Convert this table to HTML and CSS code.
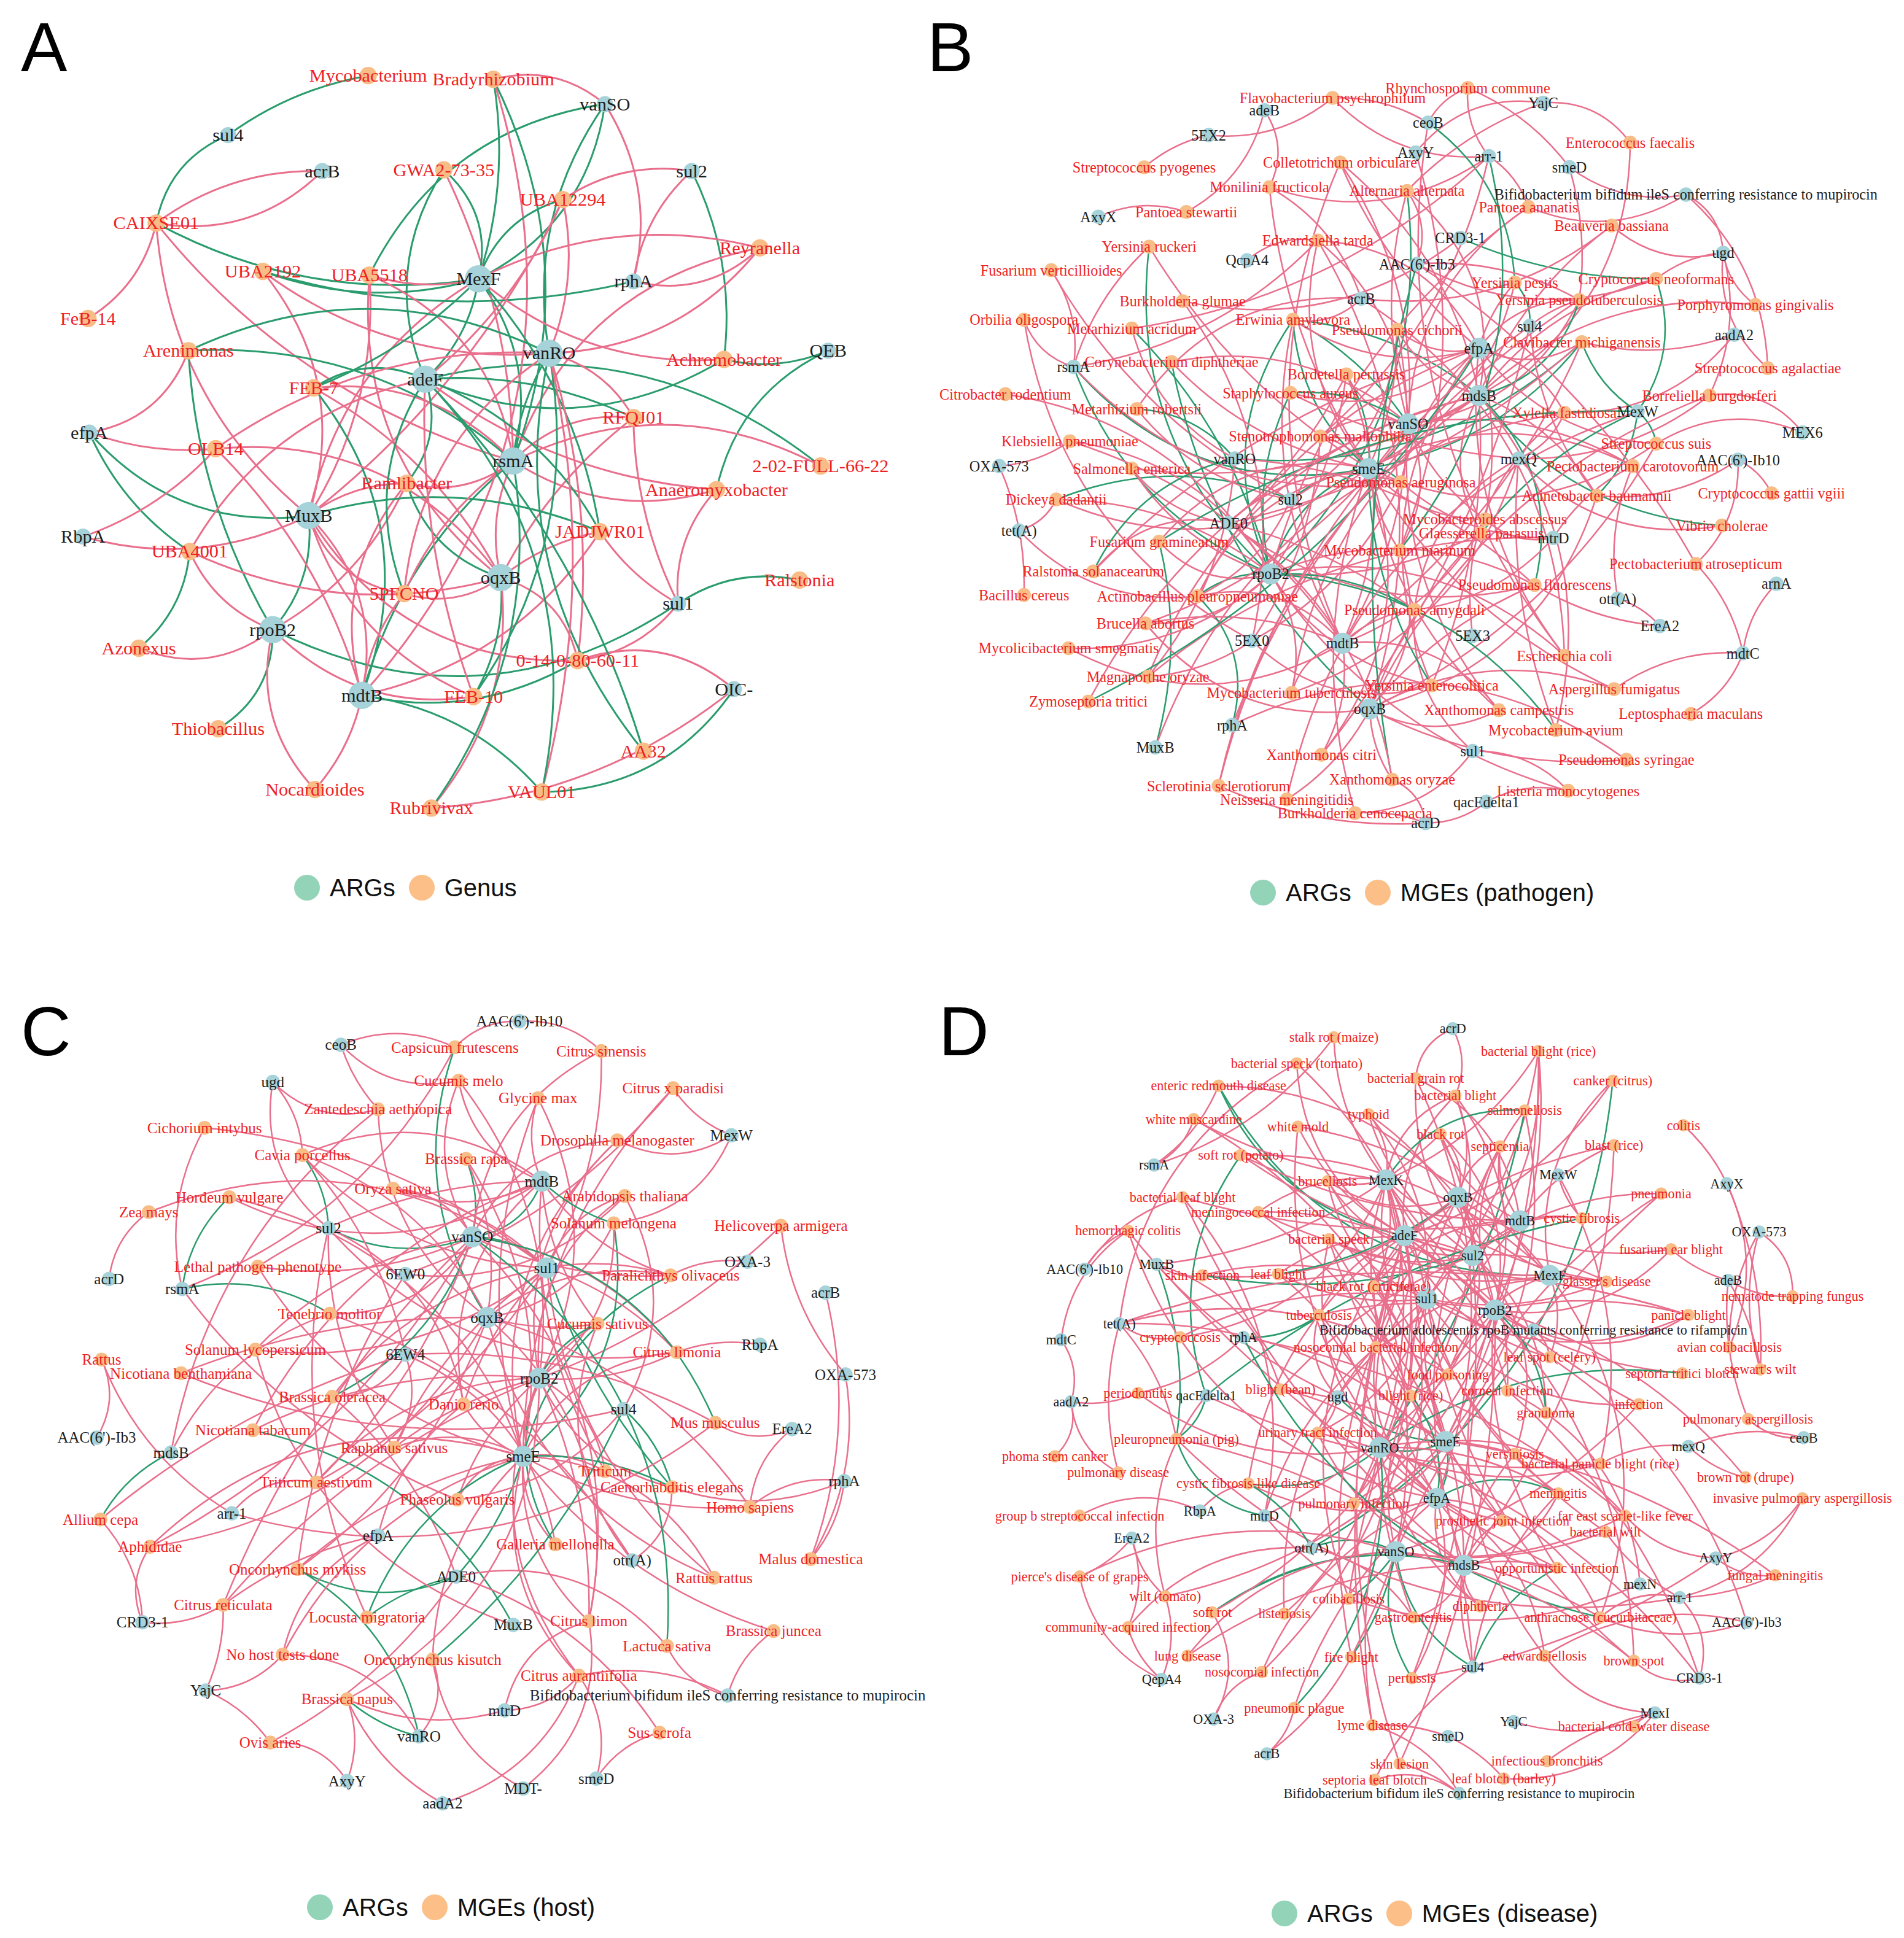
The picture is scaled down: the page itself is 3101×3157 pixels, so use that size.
FILE: index.html
```html
<!DOCTYPE html>
<html lang="en">
<head>
<meta charset="utf-8">
<title>ARG networks</title>
<link rel="stylesheet" href="styles.css">
</head>
<body>
<main class="figure">

<section class="panel pa">
<div class="letter">A</div>
<svg class="net" viewBox="0 0 747.9 693.4" data-seed="7" data-pg="0.5" data-d="3" data-r="7,6.5,11">
<text class="g" x="297" y="61" data-d="0">Mycobacterium</text>
<text class="g" x="398" y="64">Bradyrhizobium</text>
<text class="x" x="488" y="84" data-l="Bradyrhizobium;UBA5518*;MexF*;rphA;vanRO*">vanSO</text>
<text class="x" x="184" y="109" data-l="Mycobacterium*;CAIXSE01*">sul4</text>
<text class="x" x="260" y="138" data-l="CAIXSE01;CAIXSE01">acrB</text>
<text class="g" x="358" y="137">GWA2-73-35</text>
<text class="x" x="558" y="138" data-l="Achromobacter*;UBA12294;rphA">sul2</text>
<text class="g" x="454" y="161" data-d="4">UBA12294</text>
<text class="g" x="126" y="180" data-d="0" data-l="FeB-14;MexF*;rsmA;MuxB">CAIXSE01</text>
<text class="g" x="613" y="200" data-d="0" data-l="rphA;MexF;rsmA;vanRO">Reyranella</text>
<text class="g" x="212" y="219" data-d="4">UBA2192</text>
<text class="g" x="298" y="222" data-d="4">UBA5518</text>
<text class="h" x="386" y="225" data-l="rsmA*;MuxB;adeF*">MexF</text>
<text class="a" x="511" y="227">rphA</text>
<text class="g" x="71" y="257" data-d="0">FeB-14</text>
<text class="g" x="152" y="283">Arenimonas</text>
<text class="h" x="443" y="285" data-l="rsmA*">vanRO</text>
<text class="g" x="584" y="290" data-d="2">Achromobacter</text>
<text class="x" x="668" y="283" data-l="Anaeromyxobacter*;Achromobacter*">QEB</text>
<text class="h" x="343" y="306">adeF</text>
<text class="g" x="253" y="313" data-d="5">FEB-7</text>
<text class="g" x="511" y="337" data-d="5">RFQJ01</text>
<text class="x" x="72" y="349" data-l="OLB14;Arenimonas;MuxB*;UBA4001*">efpA</text>
<text class="g" x="174" y="362">OLB14</text>
<text class="h" x="414" y="372" data-l="mdtB*;oqxB">rsmA</text>
<text class="g" x="662" y="376" data-d="0" data-l="rsmA;adeF*">2-02-FULL-66-22</text>
<text class="g" x="328" y="390" data-d="6">Ramlibacter</text>
<text class="g" x="578" y="395">Anaeromyxobacter</text>
<text class="h" x="249" y="416" data-l="rpoB2*;mdtB">MuxB</text>
<text class="x" x="67" y="433" data-l="OLB14;MuxB">RbpA</text>
<text class="g" x="484" y="429" data-d="5">JADJWR01</text>
<text class="g" x="153" y="445">UBA4001</text>
<text class="h" x="404" y="466">oqxB</text>
<text class="g" x="326" y="479" data-d="6">5PFCNO</text>
<text class="g" x="645" y="468" data-d="0" data-l="sul1*">Ralstonia</text>
<text class="a" x="547" y="487" data-l="rpoB2*;JADJWR01;0-14-0-80-60-11">sul1</text>
<text class="h" x="220" y="508">rpoB2</text>
<text class="g" x="112" y="523" data-d="0" data-l="rpoB2;UBA4001*">Azonexus</text>
<text class="g" x="466" y="533" data-d="4">0-14-0-80-60-11</text>
<text class="h" x="292" y="561">mdtB</text>
<text class="g" x="382" y="562" data-d="5">FEB-10</text>
<text class="x" x="592" y="556" data-l="Rubrivivax;0-14-0-80-60-11;VAUL01*">OIC-</text>
<text class="g" x="176" y="588" data-d="0" data-l="rpoB2*">Thiobacillus</text>
<text class="g" x="519" y="606" data-d="2">AA32</text>
<text class="g" x="254" y="637" data-d="0" data-l="rpoB2;mdtB">Nocardioides</text>
<text class="g" x="437" y="639">VAUL01</text>
<text class="g" x="348" y="652" data-d="2">Rubrivivax</text>
</svg>
<div class="legend">
<span class="dot arg"></span><span class="key">ARGs</span><span class="dot mge"></span><span class="key">Genus</span>
</div>
</section>

<section class="panel pb">
<div class="letter">B</div>
<svg class="net" viewBox="747.9 0 788 693.4" data-seed="21" data-pg="0.12" data-d="3" data-r="5.6,5.8,8.5">
<text class="g" x="1184" y="71" data-d="0" data-l="smeD;ceoB;arr-1">Rhynchosporium commune</text>
<text class="g" x="1075" y="79" data-d="0" data-l="5EX2;ceoB;arr-1">Flavobacterium psychrophilum</text>
<text class="x" x="1020" y="89" data-l="Pantoea stewartii;Monilinia fructicola">adeB</text>
<text class="x" x="1245" y="83" data-l="Enterococcus faecalis;AxyY;Alternaria alternata">YajC</text>
<text class="x" x="975" y="109" data-l="Streptococcus pyogenes">5EX2</text>
<text class="a" x="1152" y="99">ceoB</text>
<text class="g" x="1315" y="115" data-d="1">Enterococcus faecalis</text>
<text class="a" x="1142" y="123">AxyY</text>
<text class="a" x="1201" y="126">arr-1</text>
<text class="g" x="1081" y="131" data-d="4">Colletotrichum orbiculare</text>
<text class="x" x="1266" y="135" data-l="Yersinia pseudotuberculosis;Bifidobacterium bifidum ileS conferring resistance to mupirocin">smeD</text>
<text class="g" x="923" y="135" data-d="0">Streptococcus pyogenes</text>
<text class="g" x="1024" y="151" data-d="3">Monilinia fructicola</text>
<text class="g" x="1135" y="154" data-d="4">Alternaria alternata</text>
<text class="x" x="1360" y="157" data-l="Streptococcus agalactiae;Pantoea ananatis;ugd">Bifidobacterium bifidum ileS conferring resistance to mupirocin</text>
<text class="g" x="1233" y="167" data-d="3">Pantoea ananatis</text>
<text class="g" x="957" y="171" data-d="0" data-l="AxyX">Pantoea stewartii</text>
<text class="x" x="886" y="175">AxyX</text>
<text class="g" x="1300" y="182" data-d="2" data-l="ugd">Beauveria bassiana</text>
<text class="a" x="1178" y="192">CRD3-1</text>
<text class="g" x="1063" y="194" data-d="5">Edwardsiella tarda</text>
<text class="g" x="927" y="199" data-d="1" data-l="rsmA;rpoB2*">Yersinia ruckeri</text>
<text class="x" x="1390" y="204" data-l="Porphyromonas gingivalis;Borreliella burgdorferi;Cryptococcus neoformans">ugd</text>
<text class="x" x="1006" y="210" data-l="Edwardsiella tarda">QcpA4</text>
<text class="a" x="1143" y="213">AAC(6')-Ib3</text>
<text class="g" x="848" y="218" data-d="0" data-l="rsmA;sul2">Fusarium verticillioides</text>
<text class="g" x="1336" y="225" data-d="3" data-l="CRD3-1*">Cryptococcus neoformans</text>
<text class="g" x="1222" y="228" data-d="3" data-l="sul4*">Yersinia pestis</text>
<text class="g" x="1274" y="242" data-d="6">Yersinia pseudotuberculosis</text>
<text class="g" x="954" y="243" data-d="2">Burkholderia glumae</text>
<text class="a" x="1098" y="241">acrB</text>
<text class="g" x="1416" y="246" data-d="1">Porphyromonas gingivalis</text>
<text class="g" x="1043" y="258" data-d="3" data-l="vanSO*;smeE*;rpoB2*;mdsB*">Erwinia amylovora</text>
<text class="g" x="826" y="258" data-d="0" data-l="rsmA;5EX0">Orbilia oligospora</text>
<text class="g" x="913" y="265" data-d="2" data-l="rpoB2*">Metarhizium acridum</text>
<text class="g" x="1127" y="266" data-d="5">Pseudomonas cichorii</text>
<text class="a" x="1234" y="263">sul4</text>
<text class="g" x="1276" y="276" data-d="6">Clavibacter michiganensis</text>
<text class="x" x="1399" y="270" data-l="Clavibacter michiganensis;Xylella fastidiosa">aadA2</text>
<text class="h" x="1193" y="281">efpA</text>
<text class="g" x="945" y="292" data-d="3">Corynebacterium diphtheriae</text>
<text class="g" x="1086" y="302" data-d="4" data-l="smeE*">Bordetella pertussis</text>
<text class="g" x="1426" y="297" data-d="0" data-l="ugd">Streptococcus agalactiae</text>
<text class="a" x="866" y="296" data-l="smeE*;rpoB2*">rsmA</text>
<text class="g" x="1041" y="317" data-d="4">Staphylococcus aureus</text>
<text class="g" x="811" y="318" data-d="1">Citrobacter rodentium</text>
<text class="g" x="1379" y="319" data-d="2" data-l="MEX6">Borreliella burgdorferi</text>
<text class="h" x="1193" y="319">mdsB</text>
<text class="g" x="917" y="330" data-d="3">Metarhizium robertsii</text>
<text class="g" x="1262" y="333" data-d="4">Xylella fastidiosa</text>
<text class="a" x="1321" y="332">MexW</text>
<text class="h" x="1136" y="342" data-l="smeE*">vanSO</text>
<text class="g" x="1065" y="352" data-d="5">Stenotrophomonas maltophilia</text>
<text class="x" x="1454" y="349" data-l="Streptococcus suis">MEX6</text>
<text class="g" x="863" y="356" data-d="2">Klebsiella pneumoniae</text>
<text class="g" x="1336" y="358" data-d="3" data-l="MexW*">Streptococcus suis</text>
<text class="a" x="1225" y="370">mexQ</text>
<text class="a" x="996" y="370">vanRO</text>
<text class="h" x="1104" y="378" data-l="rpoB2*">smeE</text>
<text class="g" x="913" y="378" data-d="3">Salmonella enterica</text>
<text class="x" x="806" y="376" data-l="Bacillus cereus;Klebsiella pneumoniae">OXA-573</text>
<text class="g" x="1317" y="376" data-d="4">Pectobacterium carotovorum</text>
<text class="x" x="1402" y="371" data-l="Cryptococcus gattii vgiii;Pectobacterium atrosepticum;Acinetobacter baumannii">AAC(6')-Ib10</text>
<text class="g" x="1130" y="389" data-d="6">Pseudomonas aeruginosa</text>
<text class="g" x="1288" y="400" data-d="3" data-l="MexW*">Acinetobacter baumannii</text>
<text class="g" x="1429" y="398" data-d="0">Cryptococcus gattii vgiii</text>
<text class="a" x="1041" y="403" data-l="smeE*;Dickeya dadantii*">sul2</text>
<text class="g" x="852" y="403" data-d="2">Dickeya dadantii</text>
<text class="g" x="1198" y="419" data-d="5">Mycobacteroides abscessus</text>
<text class="a" x="991" y="422">ADE0</text>
<text class="x" x="822" y="428" data-l="Actinobacillus pleuropneumoniae;Dickeya dadantii">tet(A)</text>
<text class="g" x="1389" y="424" data-d="1" data-l="mdsB*">Vibrio cholerae</text>
<text class="g" x="1195" y="430" data-d="4">Glaesserella parasuis</text>
<text class="g" x="935" y="437" data-d="3" data-l="MuxB*">Fusarium graminearum</text>
<text class="g" x="1129" y="444" data-d="5">Mycobacterium marinum</text>
<text class="a" x="1253" y="434">mtrD</text>
<text class="g" x="882" y="461" data-d="3">Ralstonia solanacearum</text>
<text class="h" x="1025" y="463">rpoB2</text>
<text class="g" x="1368" y="455" data-d="1" data-l="mdtC">Pectobacterium atrosepticum</text>
<text class="g" x="1238" y="472" data-d="5">Pseudomonas fluorescens</text>
<text class="x" x="1433" y="471" data-l="mdtC">arnA</text>
<text class="g" x="826" y="480" data-d="0">Bacillus cereus</text>
<text class="g" x="966" y="481" data-d="4" data-l="rpoB2*;rphA*">Actinobacillus pleuropneumoniae</text>
<text class="a" x="1305" y="483">otr(A)</text>
<text class="g" x="1141" y="492" data-d="6">Pseudomonas amygdali</text>
<text class="g" x="924" y="503" data-d="4">Brucella abortus</text>
<text class="x" x="1339" y="505" data-l="Pseudomonas fluorescens;otr(A)">EreA2</text>
<text class="a" x="1010" y="517">5EX0</text>
<text class="h" x="1083" y="519">mdtB</text>
<text class="a" x="1188" y="513">5EX3</text>
<text class="g" x="1262" y="529" data-d="4">Escherichia coli</text>
<text class="g" x="862" y="523" data-d="2">Mycolicibacterium smegmatis</text>
<text class="x" x="1406" y="527" data-l="Leptosphaeria maculans;Aspergillus fumigatus">mdtC</text>
<text class="g" x="926" y="546" data-d="4">Magnaporthe oryzae</text>
<text class="g" x="1155" y="553" data-d="5">Yersinia enterocolitica</text>
<text class="g" x="1302" y="556" data-d="2">Aspergillus fumigatus</text>
<text class="g" x="1042" y="559" data-d="4">Mycobacterium tuberculosis</text>
<text class="g" x="878" y="566" data-d="2">Zymoseptoria tritici</text>
<text class="h" x="1105" y="572">oqxB</text>
<text class="g" x="1209" y="573" data-d="4">Xanthomonas campestris</text>
<text class="g" x="1364" y="576" data-d="0">Leptosphaeria maculans</text>
<text class="a" x="994" y="585">rphA</text>
<text class="g" x="1255" y="589" data-d="3">Mycobacterium avium</text>
<text class="a" x="932" y="603">MuxB</text>
<text class="a" x="1188" y="606">sul1</text>
<text class="g" x="1066" y="609" data-d="3">Xanthomonas citri</text>
<text class="g" x="1312" y="613" data-d="2">Pseudomonas syringae</text>
<text class="g" x="1123" y="629" data-d="3">Xanthomonas oryzae</text>
<text class="g" x="983" y="634" data-d="2">Sclerotinia sclerotiorum</text>
<text class="g" x="1265" y="638" data-d="1" data-l="sul1">Listeria monocytogenes</text>
<text class="g" x="1038" y="645" data-d="2">Neisseria meningitidis</text>
<text class="x" x="1199" y="647" data-l="acrD;Listeria monocytogenes">qacEdelta1</text>
<text class="g" x="1093" y="656" data-d="2">Burkholderia cenocepacia</text>
<text class="x" x="1150" y="664" data-l="Sclerotinia sclerotiorum;Burkholderia cenocepacia;Xanthomonas oryzae">acrD</text>
</svg>
<div class="legend">
<span class="dot arg"></span><span class="key">ARGs</span><span class="dot mge"></span><span class="key">MGEs (pathogen)</span>
</div>
</section>

<section class="panel pc">
<div class="letter">C</div>
<svg class="net" viewBox="0 781.6 747.9 693.4" data-seed="33" data-pg="0.1" data-d="3" data-r="5.6,5.8,8.5">
<text class="x" x="419" y="824" data-l="Capsicum frutescens;Citrus sinensis">AAC(6')-Ib10</text>
<text class="x" x="275" y="843" data-l="Capsicum frutescens;Cucumis melo;Zantedeschia aethiopica">ceoB</text>
<text class="g" x="367" y="845" data-d="2">Capsicum frutescens</text>
<text class="g" x="485" y="848" data-d="2">Citrus sinensis</text>
<text class="g" x="370" y="872" data-d="3">Cucumis melo</text>
<text class="x" x="220" y="873" data-l="Zantedeschia aethiopica;Cavia porcellus;sul2">ugd</text>
<text class="g" x="543" y="878" data-d="2">Citrus x paradisi</text>
<text class="g" x="434" y="886" data-d="3">Glycine max</text>
<text class="g" x="305" y="895" data-d="2">Zantedeschia aethiopica</text>
<text class="g" x="165" y="910" data-d="1" data-l="rsmA">Cichorium intybus</text>
<text class="g" x="498" y="920" data-d="3">Drosophila melanogaster</text>
<text class="x" x="590" y="916" data-l="Drosophila melanogaster;Solanum melongena;Citrus x paradisi">MexW</text>
<text class="g" x="244" y="932" data-d="4" data-l="sul2*">Cavia porcellus</text>
<text class="g" x="376" y="935" data-d="2" data-l="vanSO*">Brassica rapa</text>
<text class="h" x="437" y="953">mdtB</text>
<text class="g" x="317" y="959" data-d="3">Oryza sativa</text>
<text class="g" x="504" y="965" data-d="4">Arabidopsis thaliana</text>
<text class="g" x="185" y="966" data-d="2" data-l="rsmA*">Hordeum vulgare</text>
<text class="g" x="630" y="989" data-d="1" data-l="OXA-573">Helicoverpa armigera</text>
<text class="g" x="495" y="987" data-d="4">Solanum melongena</text>
<text class="g" x="120" y="978" data-d="1" data-l="acrD">Zea mays</text>
<text class="a" x="265" y="991" data-l="vanSO*">sul2</text>
<text class="h" x="381" y="998" data-l="mdtB*;sul1*">vanSO</text>
<text class="x" x="603" y="1018" data-l="Paralichthys olivaceus">OXA-3</text>
<text class="h" x="441" y="1023" data-l="Caenorhabditis elegans*">sul1</text>
<text class="g" x="208" y="1022" data-d="3">Lethal pathogen phenotype</text>
<text class="a" x="327" y="1028">6EW0</text>
<text class="g" x="541" y="1029" data-d="5">Paralichthys olivaceus</text>
<text class="x" x="88" y="1032">acrD</text>
<text class="a" x="147" y="1040" data-l="Tenebrio molitor*">rsmA</text>
<text class="x" x="666" y="1043" data-l="Malus domestica">acrB</text>
<text class="g" x="266" y="1060" data-d="3">Tenebrio molitor</text>
<text class="h" x="393" y="1063">oqxB</text>
<text class="g" x="482" y="1068" data-d="5">Cucumis sativus</text>
<text class="g" x="206" y="1089" data-d="3">Solanum lycopersicum</text>
<text class="g" x="546" y="1091" data-d="5" data-l="RbpA">Citrus limonia</text>
<text class="x" x="613" y="1085">RbpA</text>
<text class="a" x="327" y="1093">6EW4</text>
<text class="g" x="82" y="1097" data-d="0" data-l="arr-1;AAC(6')-Ib3">Rattus</text>
<text class="g" x="146" y="1108" data-d="2">Nicotiana benthamiana</text>
<text class="h" x="435" y="1112" data-l="Galleria mellonella*">rpoB2</text>
<text class="x" x="682" y="1109" data-l="Malus domestica">OXA-573</text>
<text class="g" x="268" y="1127" data-d="4">Brassica oleracea</text>
<text class="g" x="374" y="1133" data-d="5">Danio rerio</text>
<text class="a" x="503" y="1137" data-l="Caenorhabditis elegans*">sul4</text>
<text class="g" x="577" y="1148" data-d="3">Mus musculus</text>
<text class="x" x="639" y="1153" data-l="Mus musculus;Homo sapiens">EreA2</text>
<text class="a" x="78" y="1160">AAC(6')-Ib3</text>
<text class="g" x="204" y="1154" data-d="3">Nicotiana tabacum</text>
<text class="a" x="138" y="1172">mdsB</text>
<text class="g" x="318" y="1168" data-d="5">Raphanus sativus</text>
<text class="h" x="422" y="1175" data-l="ADE0*">smeE</text>
<text class="g" x="488" y="1187" data-d="3">Triticum</text>
<text class="x" x="681" y="1195" data-l="Homo sapiens;Caenorhabditis elegans;Malus domestica">rphA</text>
<text class="g" x="542" y="1200" data-d="3">Caenorhabditis elegans</text>
<text class="g" x="255" y="1196" data-d="4">Triticum aestivum</text>
<text class="g" x="369" y="1210" data-d="4">Phaseolus vulgaris</text>
<text class="g" x="605" y="1216" data-d="2">Homo sapiens</text>
<text class="a" x="187" y="1221">arr-1</text>
<text class="g" x="81" y="1226" data-d="2">Allium cepa</text>
<text class="a" x="305" y="1239">efpA</text>
<text class="g" x="448" y="1246" data-d="2">Galleria mellonella</text>
<text class="g" x="121" y="1248" data-d="3">Aphididae</text>
<text class="g" x="654" y="1258" data-d="0">Malus domestica</text>
<text class="a" x="510" y="1259">otr(A)</text>
<text class="g" x="240" y="1266" data-d="3" data-l="ADE0*;vanRO*">Oncorhynchus mykiss</text>
<text class="a" x="368" y="1272" data-l="Locusta migratoria*">ADE0</text>
<text class="g" x="576" y="1273" data-d="3">Rattus rattus</text>
<text class="g" x="180" y="1295" data-d="3">Citrus reticulata</text>
<text class="g" x="296" y="1305" data-d="2">Locusta migratoria</text>
<text class="x" x="115" y="1309" data-l="Citrus reticulata;Aphididae;Allium cepa">CRD3-1</text>
<text class="a" x="414" y="1311">MuxB</text>
<text class="g" x="475" y="1308" data-d="4">Citrus limon</text>
<text class="g" x="624" y="1316" data-d="1">Brassica juncea</text>
<text class="g" x="228" y="1335" data-d="2">No host tests done</text>
<text class="g" x="538" y="1328" data-d="2">Lactuca sativa</text>
<text class="g" x="349" y="1339" data-d="2">Oncorhynchus kisutch</text>
<text class="g" x="467" y="1352" data-d="2">Citrus aurantiifolia</text>
<text class="x" x="587" y="1368" data-l="Citrus aurantiifolia;Lactuca sativa;Brassica juncea">Bifidobacterium bifidum ileS conferring resistance to mupirocin</text>
<text class="x" x="166" y="1364" data-l="Ovis aries;No host tests done;Citrus reticulata">YajC</text>
<text class="g" x="280" y="1371" data-d="1">Brassica napus</text>
<text class="x" x="407" y="1380" data-l="Citrus aurantiifolia;Brassica napus;Citrus limon">mtrD</text>
<text class="g" x="532" y="1398" data-d="1">Sus scrofa</text>
<text class="x" x="338" y="1401" data-l="Brassica napus*;Oncorhynchus kisutch;No host tests done">vanRO</text>
<text class="g" x="218" y="1406" data-d="1">Ovis aries</text>
<text class="x" x="280" y="1437" data-l="Ovis aries;Brassica napus">AxyY</text>
<text class="x" x="481" y="1435" data-l="Citrus aurantiifolia;Sus scrofa">smeD</text>
<text class="x" x="422" y="1443" data-l="Citrus limon;Oncorhynchus kisutch">MDT-</text>
<text class="x" x="357" y="1455" data-l="Citrus aurantiifolia;Brassica napus">aadA2</text>
</svg>
<div class="legend">
<span class="dot arg"></span><span class="key">ARGs</span><span class="dot mge"></span><span class="key">MGEs (host)</span>
</div>
</section>

<section class="panel pd">
<div class="letter">D</div>
<svg class="net" viewBox="747.9 781.6 788 693.4" data-seed="45" data-pg="0.06" data-d="3" data-r="5,5.3,8.5">
<text class="x" x="1172" y="830" data-l="bacterial blight;bacterial grain rot">acrD</text>
<text class="g" x="1076" y="837" data-d="1" data-l="rsmA">stalk rot (maize)</text>
<text class="g" x="1241" y="848" data-d="5">bacterial blight (rice)</text>
<text class="g" x="1046" y="858" data-d="3">bacterial speck (tomato)</text>
<text class="g" x="1142" y="870" data-d="3">bacterial grain rot</text>
<text class="g" x="1301" y="872" data-d="3">canker (citrus)</text>
<text class="g" x="983" y="876" data-d="2" data-l="adeF*;rsmA">enteric redmouth disease</text>
<text class="g" x="1174" y="884" data-d="5">bacterial blight</text>
<text class="g" x="1230" y="896" data-d="4">salmonellosis</text>
<text class="g" x="1104" y="899" data-d="4">typhoid</text>
<text class="g" x="963" y="903" data-d="2" data-l="rsmA">white muscardine</text>
<text class="g" x="1047" y="909" data-d="3">white mold</text>
<text class="g" x="1358" y="908" data-d="0" data-l="AxyX">colitis</text>
<text class="g" x="1162" y="915" data-d="5">black rot</text>
<text class="g" x="1210" y="925" data-d="5">septicemia</text>
<text class="g" x="1302" y="924" data-d="3">blast (rice)</text>
<text class="g" x="1001" y="932" data-d="3" data-l="qacEdelta1*">soft rot (potato)</text>
<text class="x" x="931" y="940">rsmA</text>
<text class="g" x="1071" y="953" data-d="5">brucellosis</text>
<text class="h" x="1118" y="952">MexK</text>
<text class="a" x="1257" y="948">MexW</text>
<text class="h" x="1176" y="966">oqxB</text>
<text class="x" x="1393" y="955" data-l="avian colibacillosis;stewart's wilt">AxyX</text>
<text class="g" x="1340" y="963" data-d="3">pneumonia</text>
<text class="g" x="954" y="966" data-d="3" data-l="AAC(6')-Ib10">bacterial leaf blight</text>
<text class="g" x="1015" y="978" data-d="4">meningococcal infection</text>
<text class="h" x="1226" y="985">mdtB</text>
<text class="g" x="1276" y="983" data-d="4">cystic fibrosis</text>
<text class="x" x="1419" y="994" data-l="avian colibacillosis;stewart's wilt;nematode trapping fungus">OXA-573</text>
<text class="g" x="910" y="993" data-d="2" data-l="AAC(6')-Ib10;mdtC">hemorrhagic colitis</text>
<text class="g" x="1072" y="1000" data-d="5">bacterial speck</text>
<text class="h" x="1133" y="997">adeF</text>
<text class="g" x="1348" y="1008" data-d="2" data-l="adeB">fusarium ear blight</text>
<text class="h" x="1188" y="1013">sul2</text>
<text class="h" x="1250" y="1029">MexF</text>
<text class="g" x="1296" y="1034" data-d="5">glasser's disease</text>
<text class="x" x="1394" y="1033" data-l="stewart's wilt;pulmonary aspergillosis;nematode trapping fungus">adeB</text>
<text class="x" x="875" y="1024">AAC(6')-Ib10</text>
<text class="a" x="933" y="1020" data-l="pleuropneumonia (pig)*">MuxB</text>
<text class="g" x="970" y="1029" data-d="3" data-l="MuxB">skin infection</text>
<text class="g" x="1031" y="1028" data-d="4">leaf blight</text>
<text class="g" x="1108" y="1038" data-d="6">black rot (cruciferae)</text>
<text class="g" x="1446" y="1046" data-d="0">nematode trapping fungus</text>
<text class="h" x="1151" y="1048">sul1</text>
<text class="h" x="1206" y="1057">rpoB2</text>
<text class="g" x="1362" y="1061" data-d="3">panicle blight</text>
<text class="g" x="1064" y="1061" data-d="4" data-l="rphA*">tuberculosis</text>
<text class="x" x="1237" y="1073" data-l="rpoB2;leaf spot (celery);panicle blight">Bifidobacterium adolescentis rpoB mutants conferring resistance to rifampicin</text>
<text class="g" x="1110" y="1087" data-d="5">nosocomial bacterial infection</text>
<text class="g" x="1395" y="1087" data-d="0">avian colibacillosis</text>
<text class="a" x="903" y="1068" data-l="cryptococcosis;pleuropneumonia (pig)">tet(A)</text>
<text class="g" x="952" y="1079" data-d="2">cryptococcosis</text>
<text class="a" x="1003" y="1079">rphA</text>
<text class="x" x="856" y="1081" data-l="aadA2">mdtC</text>
<text class="g" x="1250" y="1095" data-d="4">leaf spot (celery)</text>
<text class="g" x="1168" y="1109" data-d="5">food poisoning</text>
<text class="g" x="1357" y="1108" data-d="2">septoria tritici blotch</text>
<text class="g" x="1420" y="1105" data-d="0">stewart's wilt</text>
<text class="g" x="1216" y="1122" data-d="4">corneal infection</text>
<text class="g" x="918" y="1124" data-d="2" data-l="aadA2">periodontitis</text>
<text class="a" x="973" y="1126" data-l="pleuropneumonia (pig)*">qacEdelta1</text>
<text class="g" x="1033" y="1121" data-d="4">blight (bean)</text>
<text class="a" x="1079" y="1127" data-l="smeE*">ugd</text>
<text class="g" x="1138" y="1126" data-d="5">blight (rice)</text>
<text class="x" x="864" y="1131" data-l="phoma stem canker;pulmonary disease">aadA2</text>
<text class="g" x="1322" y="1133" data-d="3">infection</text>
<text class="g" x="1247" y="1140" data-d="3">granuloma</text>
<text class="g" x="1410" y="1145" data-d="0" data-l="ceoB">pulmonary aspergillosis</text>
<text class="x" x="1455" y="1160" data-l="mexQ">ceoB</text>
<text class="g" x="1063" y="1156" data-d="4">urinary tract infection</text>
<text class="h" x="1166" y="1163" data-l="efpA*;vanRO*">smeE</text>
<text class="g" x="949" y="1161" data-d="2">pleuropneumonia (pig)</text>
<text class="h" x="1113" y="1168">vanRO</text>
<text class="x" x="1362" y="1167" data-l="brown rot (drupe);bacterial panicle blight (rice)">mexQ</text>
<text class="g" x="1222" y="1173" data-d="3">yersiniosis</text>
<text class="g" x="851" y="1175" data-d="0">phoma stem canker</text>
<text class="g" x="1291" y="1181" data-d="3">bacterial panicle blight (rice)</text>
<text class="g" x="902" y="1188" data-d="1">pulmonary disease</text>
<text class="g" x="1408" y="1192" data-d="1">brown rot (drupe)</text>
<text class="g" x="1007" y="1197" data-d="3" data-l="vanRO*">cystic fibrosis-like disease</text>
<text class="g" x="1257" y="1205" data-d="4" data-l="efpA*">meningitis</text>
<text class="h" x="1159" y="1209">efpA</text>
<text class="g" x="1454" y="1209" data-d="0" data-l="AxyY;arr-1">invasive pulmonary aspergillosis</text>
<text class="g" x="1092" y="1213" data-d="4">pulmonary infection</text>
<text class="x" x="968" y="1219" data-l="group b streptococcal infection;cystic fibrosis-like disease">RbpA</text>
<text class="a" x="1020" y="1223" data-l="pleuropneumonia (pig)*">mtrD</text>
<text class="g" x="871" y="1223" data-d="0">group b streptococcal infection</text>
<text class="g" x="1212" y="1227" data-d="4">prosthetic joint infection</text>
<text class="g" x="1311" y="1223" data-d="4">far east scarlet-like fever</text>
<text class="g" x="1295" y="1236" data-d="3">bacterial wilt</text>
<text class="x" x="913" y="1241" data-l="pierce's disease of grapes;community-acquired infection;wilt (tomato)">EreA2</text>
<text class="a" x="1058" y="1249" data-l="vanSO*">otr(A)</text>
<text class="h" x="1126" y="1252" data-l="soft rot*;fire blight*;pertussis*;colibacillosis*;sul4*">vanSO</text>
<text class="h" x="1181" y="1263">mdsB</text>
<text class="g" x="1256" y="1265" data-d="4" data-l="sul4*">opportunistic infection</text>
<text class="a" x="1384" y="1257">AxyY</text>
<text class="g" x="871" y="1272" data-d="1">pierce's disease of grapes</text>
<text class="g" x="1432" y="1271" data-d="1" data-l="AxyY;arr-1">fungal meningitis</text>
<text class="a" x="1323" y="1278">mexN</text>
<text class="g" x="940" y="1288" data-d="2">wilt (tomato)</text>
<text class="g" x="1088" y="1290" data-d="3">colibacillosis</text>
<text class="a" x="1355" y="1289">arr-1</text>
<text class="g" x="1194" y="1296" data-d="3">diphtheria</text>
<text class="g" x="978" y="1301" data-d="2" data-l="OXA-3">soft rot</text>
<text class="g" x="1036" y="1302" data-d="2">listeriosis</text>
<text class="g" x="1140" y="1305" data-d="4">gastroenteritis</text>
<text class="g" x="1291" y="1305" data-d="4" data-l="arr-1;AAC(6')-Ib3">anthracnose (cucurbitaceae)</text>
<text class="a" x="1409" y="1309">AAC(6')-Ib3</text>
<text class="g" x="910" y="1313" data-d="1" data-l="QepA4">community-acquired infection</text>
<text class="g" x="1246" y="1336" data-d="3" data-l="MexI">edwardsiellosis</text>
<text class="g" x="1318" y="1340" data-d="3" data-l="CRD3-1">brown spot</text>
<text class="g" x="958" y="1336" data-d="2">lung disease</text>
<text class="a" x="1371" y="1354" data-l="arr-1">CRD3-1</text>
<text class="g" x="1018" y="1349" data-d="2" data-l="OXA-3">nosocomial infection</text>
<text class="g" x="1090" y="1337" data-d="2" data-l="acrB">fire blight</text>
<text class="g" x="1139" y="1354" data-d="3">pertussis</text>
<text class="a" x="1188" y="1345">sul4</text>
<text class="x" x="937" y="1355" data-l="pierce's disease of grapes;wilt (tomato)">QepA4</text>
<text class="g" x="1044" y="1378" data-d="2" data-l="acrB">pneumonic plague</text>
<text class="x" x="979" y="1387">OXA-3</text>
<text class="x" x="1335" y="1382" data-l="bacterial cold-water disease;infectious bronchitis;YajC;leaf blotch (barley)">MexI</text>
<text class="g" x="1107" y="1392" data-d="2" data-l="smeD">lyme disease</text>
<text class="x" x="1221" y="1389">YajC</text>
<text class="g" x="1318" y="1393" data-d="0">bacterial cold-water disease</text>
<text class="x" x="1168" y="1401" data-l="leaf blotch (barley)">smeD</text>
<text class="x" x="1022" y="1415">acrB</text>
<text class="g" x="1129" y="1423" data-d="2">skin lesion</text>
<text class="g" x="1248" y="1421" data-d="0">infectious bronchitis</text>
<text class="g" x="1109" y="1436" data-d="1">septoria leaf blotch</text>
<text class="g" x="1213" y="1435" data-d="0">leaf blotch (barley)</text>
<text class="x" x="1177" y="1447" data-l="septoria leaf blotch;skin lesion;lyme disease">Bifidobacterium bifidum ileS conferring resistance to mupirocin</text>
</svg>
<div class="legend">
<span class="dot arg"></span><span class="key">ARGs</span><span class="dot mge"></span><span class="key">MGEs (disease)</span>
</div>
</section>

</main>
<script src="script.js"></script>
</body>
</html>
```

FILE: styles.css
```css
html, body {
  margin: 0;
  padding: 0;
  background: #ffffff;
}

.figure {
  display: grid;
  grid-template-columns: 1510px 1591px;
  grid-template-rows: 1578px 1579px;
  width: 3101px;
  height: 3157px;
  overflow: hidden;
}

.panel {
  position: relative;
  display: flex;
  flex-direction: column;
  align-items: flex-start;
}

.letter {
  position: absolute;
  font-family: "Liberation Sans", Arial, sans-serif;
  font-size: 113px;
  line-height: 1;
  color: #000;
  z-index: 2;
}

.pa .letter { left: 34px; top: 21px; }
.pb .letter { left: 0px; top: 21px; }
.pc .letter { left: 34px; top: 46px; }
.pd .letter { left: 19px; top: 46px; }

.net {
  display: block;
  width: 100%;
  height: 1400px;
  overflow: visible;
}

.net text {
  font-family: "Liberation Serif", "Times New Roman", serif;
  text-anchor: middle;
  dominant-baseline: central;
}

.net text.g { fill: #ef1f24; }
.net text.a,
.net text.h,
.net text.x { fill: #1e1e1e; }

.pa .net text { font-size: 15px; }
.pb .net text { font-size: 12px; }
.pc .net text { font-size: 12.4px; }
.pd .net text { font-size: 11px; }

.net .ep { fill: none; stroke: #e96f8c; stroke-width: 1.25; }
.net .eg { fill: none; stroke: #2b9c6e; stroke-width: 1.25; }
.pa .net .ep, .pa .net .eg { stroke-width: 1.5; }

.net .ng { fill: #f8bd86; }
.net .na { fill: #a6d2da; }

.legend {
  display: flex;
  align-items: center;
  height: 50px;
  font-family: "Liberation Sans", Arial, sans-serif;
  font-size: 40px;
  color: #111;
}

.legend .dot {
  width: 42px;
  height: 42px;
  border-radius: 50%;
  margin-right: 16px;
}

.legend .dot.arg { background: #93d4b9; }
.legend .dot.mge { background: #fcbf87; }

.legend .key { margin-right: 22px; }

.pa .legend { margin-left: 479px; margin-top: 21px; }
.pb .legend { margin-left: 526px; margin-top: 29px; }
.pc .legend { margin-left: 500px; margin-top: 104px; }
.pd .legend { margin-left: 561px; margin-top: 114px; }
```

FILE: script.js
```js
(function () {
  var NS = 'http://www.w3.org/2000/svg';
  function mk(seed) {
    return function () {
      seed |= 0; seed = seed + 0x6D2B79F5 | 0;
      var t = Math.imul(seed ^ seed >>> 15, 1 | seed);
      t = t + Math.imul(t ^ t >>> 7, 61 | t) ^ t;
      return ((t ^ t >>> 14) >>> 0) / 4294967296;
    };
  }
  var W = { h: 6, a: 1.6, x: 0 };
  var svgs = document.querySelectorAll('svg.net');
  for (var s = 0; s < svgs.length; s++) {
    (function (svg) {
      var rnd = mk(+svg.getAttribute('data-seed'));
      var pg = +svg.getAttribute('data-pg');
      var dd = +svg.getAttribute('data-d');
      var R = svg.getAttribute('data-r').split(',').map(Number);
      var texts = [].slice.call(svg.querySelectorAll('text'));
      var nodes = texts.map(function (t) {
        return { t: t, name: t.textContent, x: +t.getAttribute('x'), y: +t.getAttribute('y'), c: t.getAttribute('class') };
      });
      var byName = {};
      nodes.forEach(function (n) { byName[n.name] = n; });
      var edges = [], seen = {};
      function add(a, b, green) {
        edges.push([a, b, green]);
        seen[a.name + '|' + b.name] = 1; seen[b.name + '|' + a.name] = 1;
      }
      nodes.forEach(function (n) {
        var l = n.t.getAttribute('data-l');
        if (!l) return;
        l.split(';').forEach(function (it) {
          it = it.trim();
          var g = it.slice(-1) === '*';
          if (g) it = it.slice(0, -1);
          var m = byName[it];
          if (m) add(n, m, g);
        });
      });
      var args = nodes.filter(function (n) { return n.c !== 'g'; });
      nodes.forEach(function (n) {
        if (n.c !== 'g') return;
        var dv = n.t.getAttribute('data-d');
        var d = dv !== null ? +dv : dd;
        var pool = args.filter(function (m) { return W[m.c] > 0 && !seen[n.name + '|' + m.name]; });
        for (var i = 0; i < d && pool.length; i++) {
          var ws = pool.map(function (m) {
            var dx = m.x - n.x, dy = m.y - n.y, dist = Math.sqrt(dx * dx + dy * dy);
            return W[m.c] / (1 + Math.pow(dist / 220, 2));
          });
          var tot = ws.reduce(function (a, b) { return a + b; }, 0);
          var r = rnd() * tot, k = 0;
          while (k < ws.length - 1 && (r -= ws[k]) > 0) k++;
          add(n, pool[k], rnd() < pg);
          pool.splice(k, 1);
        }
      });
      var ge = document.createElementNS(NS, 'g');
      ge.setAttribute('class', 'edges');
      edges.forEach(function (e) {
        var a = e[0], b = e[1], dx = b.x - a.x, dy = b.y - a.y;
        var k = (0.1 + rnd() * 0.2) * (rnd() < 0.5 ? -1 : 1);
        var cx = (a.x + b.x) / 2 - dy * k, cy = (a.y + b.y) / 2 + dx * k;
        var p = document.createElementNS(NS, 'path');
        p.setAttribute('d', 'M' + a.x + ' ' + a.y + 'Q' + cx.toFixed(1) + ' ' + cy.toFixed(1) + ' ' + b.x + ' ' + b.y);
        p.setAttribute('class', e[2] ? 'eg' : 'ep');
        ge.appendChild(p);
      });
      var gn = document.createElementNS(NS, 'g');
      gn.setAttribute('class', 'nodes');
      nodes.forEach(function (n) {
        var c = document.createElementNS(NS, 'circle');
        c.setAttribute('cx', n.x); c.setAttribute('cy', n.y);
        c.setAttribute('r', n.c === 'g' ? R[0] : (n.c === 'h' ? R[2] : R[1]));
        c.setAttribute('class', n.c === 'g' ? 'ng' : 'na');
        gn.appendChild(c);
      });
      svg.insertBefore(gn, svg.firstChild);
      svg.insertBefore(ge, svg.firstChild);
    })(svgs[s]);
  }
})();
```
